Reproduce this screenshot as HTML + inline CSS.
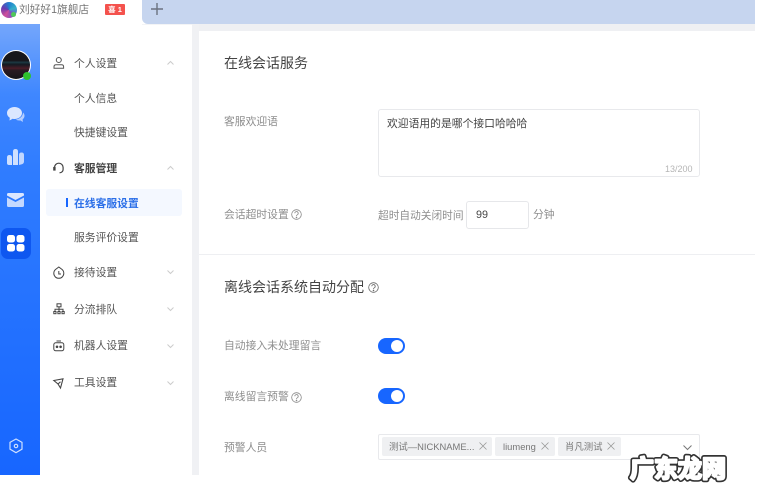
<!DOCTYPE html>
<html><head><meta charset="utf-8">
<style>
html,body{margin:0;padding:0;background:#fff}
body{width:764px;height:496px;position:relative;overflow:hidden;font-family:"Liberation Sans","Noto Sans CJK SC",sans-serif;color:#555}
#w{position:absolute;left:0;top:0;width:764px;height:496px;filter:blur(.35px)}
.a{position:absolute;white-space:nowrap}
.m{font-size:10.8px;line-height:16px;color:#555}
.l{font-size:10.8px;line-height:16px;color:#8e8e8e}
.h{font-size:14px;line-height:20px;color:#444}
svg{position:absolute;overflow:visible}
.tag{position:absolute;top:437px;height:19px;background:#eff0f2;border-radius:2px;font-size:9.4px;line-height:20px;color:#777;white-space:nowrap;box-sizing:border-box;padding-left:7px}
.sw{position:absolute;left:378px;width:27px;height:16px;border-radius:8px;background:#1766ff}
.sw i{position:absolute;right:2px;top:2px;width:12px;height:12px;border-radius:50%;background:#fff}
</style></head><body><div id="w">
<div class="a" style="left:142px;top:0;width:613px;height:24px;background:#c6d5ef;border-bottom-left-radius:6px"></div>
<div class="a" style="left:192px;top:24px;width:563px;height:7px;background:#eff0f3"></div>
<div class="a" style="left:142px;top:24px;width:50px;height:1px;background:#f3f4f6"></div>
<div class="a" style="left:192px;top:24px;width:7px;height:451px;background:#f0f1f4"></div>
<div class="a" style="left:1px;top:2px;width:16px;height:16px;border-radius:50%;background:conic-gradient(#1f7fd0,#36b2c8,#7b4dc4,#d0509a,#6a3ab0,#1f7fd0)"></div>
<div class="a" style="left:11px;top:12px;width:5px;height:5px;border-radius:50%;background:#4fc75a"></div>
<div class="a" style="left:19px;top:1px;font-size:10.7px;line-height:18px;color:#777">刘好好1旗舰店</div>
<div class="a" style="left:105px;top:4px;width:20px;height:11px;background:#f4524d;border-radius:1px;color:#fff;font-size:7.500px;line-height:11px;text-align:center;font-weight:bold">喜 1</div>
<svg style="left:151px;top:3px" width="12" height="12"><path d="M6 0V12M0 6H12" stroke="#6b7280" stroke-width="1.4"/></svg>

<!-- blue rail -->
<div class="a" style="left:0;top:24px;width:40px;height:451px;background:linear-gradient(180deg,#74a6fb 0,#3f87ff 70px,#2f7cff 150px,#1766ff 100%)"></div>
<div class="a" style="left:1px;top:50px;width:30px;height:30px;border-radius:50%;background:#fff"></div>
<div class="a" style="left:2px;top:51px;width:28px;height:28px;border-radius:50%;background:linear-gradient(180deg,#17171c 0,#17171c 35%,#1c3a44 40%,#141a22 48%,#4a1c26 62%,#2a1a22 68%,#15151a 100%)"></div>
<div class="a" style="left:23px;top:72px;width:8px;height:8px;border-radius:50%;background:#2fc22f"></div>
<svg style="left:7px;top:107px" width="18" height="16" fill="#dbe7ff"><path d="M7.500 0C3.300 0 0 2.700 0 6c0 2 1.100 3.700 2.800 4.800L2.500 13.500l3.200-1.800C6.300 11.900 6.900 12 7.500 12c4.200 0 7.500-2.700 7.500-6S11.700 0 7.500 0Z"/><path d="M16 5.500c1 1 1.500 2.100 1.500 3.300 0 1.500-.7 2.700-1.900 3.600l.3 2.600-2.600-1.600c-1.800.3-3.300-.1-4.500-.9 3.900-.4 7.200-3.100 7.200-7Z" fill="#b4ceff"/></svg>
<svg style="left:7px;top:149px" width="17" height="16" fill="#cfe0ff"><path d="M0 8.500Q0 6 2.500 6T5 8.500V16H2Q0 16 0 14Z"/><path d="M6 2.500Q6 0 8.500 0T11 2.500V16H6Z"/><path d="M12 6Q12 3.500 14.500 3.500T17 6V12.500Q17 15 14 15.500L12 16Z" fill="#c0d6ff"/></svg>
<svg style="left:7px;top:193px" width="17" height="14"><path d="M0 1.500Q0 0 1.500 0H15.500Q17 0 17 1.500V2.500L8.500 7 0 2.500Z" fill="#dbe7ff"/><path d="M0 4.500L8.500 9 17 4.500V12.500Q17 14 15.500 14H1.500Q0 14 0 12.500Z" fill="#c4d9ff"/></svg>
<div class="a" style="left:1px;top:228px;width:30px;height:31px;border-radius:7px;background:#0e57f0"></div>
<svg style="left:7px;top:235px" width="18" height="17" fill="#fff"><rect width="8" height="7.500" rx="2.500"/><rect x="9.500" width="8" height="7.500" rx="2.500"/><rect y="9" width="8" height="7.500" rx="2.500"/><rect x="9.500" y="9" width="8" height="7.500" rx="2.500"/></svg>
<svg style="left:9px;top:438px" width="14" height="16" fill="none" stroke="#cfe0ff" stroke-width="1.200"><path d="M7 1L13 4.300V11.200L7 14.700 1 11.200V4.300Z"/><circle cx="7" cy="8" r="1.700"/></svg>

<!-- menu -->
<svg style="left:53px;top:57px" width="12" height="12" fill="none" stroke="#555" stroke-width="1"><circle cx="5.800" cy="3" r="2.500"/><path d="M1 11.200V9.800Q1 7.800 3 7.800H8.600Q10.600 7.800 10.600 9.800V11.200Z"/></svg>
<div class="a m" style="left:74px;top:56px">个人设置</div>
<svg style="left:167px;top:61px" width="7" height="4" fill="none" stroke="#ccc"><path d="M.5 3.500L3.500.5 6.500 3.500"/></svg>
<div class="a m" style="left:74px;top:91px">个人信息</div>
<div class="a m" style="left:74px;top:125px">快捷键设置</div>
<svg style="left:53px;top:162px" width="12" height="12" fill="none" stroke="#444" stroke-width="1.200"><path d="M1.500 7.500V5.500a4.300 4.300 0 0 1 8.600 0V7.500M10.100 7.500Q10 10.500 6.500 10.800"/><rect x=".8" y="5.500" width="1.200" height="2.500" fill="#444"/></svg>
<div class="a m" style="left:74px;top:161px;color:#444;font-weight:bold">客服管理</div>
<svg style="left:167px;top:166px" width="7" height="4" fill="none" stroke="#ccc"><path d="M.5 3.500L3.500.5 6.500 3.500"/></svg>
<div class="a" style="left:46px;top:189px;width:136px;height:27px;background:#f4f8ff;border-radius:3px"></div>
<div class="a" style="left:66px;top:198px;width:2px;height:9px;background:#1766ff"></div>
<div class="a m" style="left:74px;top:196px;color:#2b6fe8;font-weight:bold">在线客服设置</div>
<div class="a m" style="left:74px;top:230px">服务评价设置</div>
<svg style="left:53px;top:266px" width="12" height="13" fill="none" stroke="#444" stroke-width="1"><path d="M5.800 1L2.500 3.500Q.8 5 .8 7.300a5 5 0 0 0 10 0Q10.800 5 9.100 3.500Z"/><path d="M5.800 5V8H8" stroke-width="1"/></svg>
<div class="a m" style="left:74px;top:265px">接待设置</div>
<svg style="left:167px;top:270px" width="7" height="4" fill="none" stroke="#ccc"><path d="M.5.500L3.500 3.500 6.500.500"/></svg>
<svg style="left:53px;top:303px" width="12" height="12" fill="none" stroke="#444" stroke-width="1"><rect x="4" y=".8" width="4" height="3"/><path d="M6 4V8M2 8V6.200H10V8"/><rect x=".8" y="8.500" width="2.200" height="2.200"/><rect x="4.900" y="8.500" width="2.200" height="2.200"/><rect x="9" y="8.500" width="2.200" height="2.200"/></svg>
<div class="a m" style="left:74px;top:302px">分流排队</div>
<svg style="left:167px;top:307px" width="7" height="4" fill="none" stroke="#ccc"><path d="M.5.500L3.500 3.500 6.500.500"/></svg>
<svg style="left:53px;top:340px" width="12" height="12" fill="none" stroke="#444" stroke-width="1"><rect x=".8" y="2.800" width="10" height="8" rx="2"/><path d="M3.500 1H8"/><circle cx="4" cy="6.800" r=".8" fill="#444"/><circle cx="7.600" cy="6.800" r=".8" fill="#444"/></svg>
<div class="a m" style="left:74px;top:338px">机器人设置</div>
<svg style="left:167px;top:344px" width="7" height="4" fill="none" stroke="#ccc"><path d="M.5.500L3.500 3.500 6.500.500"/></svg>
<svg style="left:53px;top:378px" width="11" height="11" fill="none" stroke="#444" stroke-width="1.100"><path d="M.8 2.500L10 .8 7.500 10 5 6Z"/><path d="M5 6L7.500 3.800"/></svg>
<div class="a m" style="left:74px;top:375px">工具设置</div>
<svg style="left:167px;top:381px" width="7" height="4" fill="none" stroke="#ccc"><path d="M.5.500L3.500 3.500 6.500.500"/></svg>

<!-- content -->
<div class="a h" style="left:224px;top:53px">在线会话服务</div>
<div class="a l" style="left:224px;top:114px">客服欢迎语</div>
<div class="a" style="left:378px;top:109px;width:322px;height:68px;box-sizing:border-box;border:1px solid #e8e9ec;border-radius:3px"></div>
<div class="a" style="left:387px;top:116px;font-size:10.800px;line-height:16px;color:#444">欢迎语用的是哪个接口哈哈哈</div>
<div class="a" style="left:665px;top:162px;font-size:9px;line-height:14px;color:#b5b5b5">13/200</div>
<div class="a l" style="left:224px;top:207px">会话超时设置</div>
<svg style="left:291px;top:209px" width="11" height="11" fill="none" stroke="#888" stroke-width=".8"><circle cx="5.500" cy="5.500" r="4.800"/><path d="M3.800 4.300a1.700 1.700 0 1 1 2.500 1.500Q5.500 6.200 5.500 7"/><circle cx="5.500" cy="8.400" r=".4" fill="#888"/></svg>
<div class="a l" style="left:378px;top:208px;font-size:10.700px">超时自动关闭时间</div>
<div class="a" style="left:466px;top:201px;width:63px;height:28px;box-sizing:border-box;border:1px solid #e6e7ea;border-radius:3px"></div>
<div class="a" style="left:476px;top:207px;font-size:10.800px;line-height:16px;color:#444">99</div>
<div class="a l" style="left:533px;top:207px">分钟</div>
<div class="a" style="left:199px;top:254px;width:556px;height:1px;background:#eeeff2"></div>

<div class="a h" style="left:224px;top:277px">离线会话系统自动分配</div>
<svg style="left:368px;top:282px" width="11" height="11" fill="none" stroke="#666" stroke-width=".8"><circle cx="5.500" cy="5.500" r="4.800"/><path d="M3.800 4.300a1.700 1.700 0 1 1 2.500 1.500Q5.500 6.200 5.500 7"/><circle cx="5.500" cy="8.400" r=".4" fill="#666"/></svg>
<div class="a l" style="left:224px;top:338px">自动接入未处理留言</div>
<div class="sw" style="top:338px"><i></i></div>
<div class="a l" style="left:224px;top:389px">离线留言预警</div>
<svg style="left:291px;top:392px" width="11" height="11" fill="none" stroke="#888" stroke-width=".8"><circle cx="5.500" cy="5.500" r="4.800"/><path d="M3.800 4.300a1.700 1.700 0 1 1 2.500 1.500Q5.500 6.200 5.500 7"/><circle cx="5.500" cy="8.400" r=".4" fill="#888"/></svg>
<div class="sw" style="top:388px"><i></i></div>
<div class="a l" style="left:224px;top:440px">预警人员</div>
<div class="a" style="left:378px;top:434px;width:322px;height:26px;box-sizing:border-box;border:1px solid #e8e9ec;border-radius:2px"></div>
<div class="tag" style="left:382px;width:110px">测试—NICKNAME...</div>
<svg style="left:479px;top:442px" width="8" height="8" stroke="#999" stroke-width=".8"><path d="M.5.500L7.500 7.500M7.500.500L.5 7.500"/></svg>
<div class="tag" style="left:495px;width:60px;padding-left:8px">liumeng</div>
<svg style="left:541px;top:442px" width="8" height="8" stroke="#999" stroke-width=".8"><path d="M.5.500L7.500 7.500M7.500.500L.5 7.500"/></svg>
<div class="tag" style="left:558px;width:63px;padding-left:7px">肖凡测试</div>
<svg style="left:607px;top:442px" width="8" height="8" stroke="#999" stroke-width=".8"><path d="M.5.500L7.500 7.500M7.500.500L.5 7.500"/></svg>
<svg style="left:683px;top:445px" width="9" height="5" fill="none" stroke="#777"><path d="M.5.500L4.500 4.500 8.500.500"/></svg>

<svg style="left:0;top:0" width="764" height="496"><g font-size="24" font-weight="700" font-family="Noto Sans CJK SC, sans-serif" stroke-linejoin="round"><text x="630" y="477" fill="#333" stroke="#333" stroke-width="5.500">广东龙网</text><text x="630" y="477" fill="#fff" stroke="#fff" stroke-width="2.200">广东龙网</text></g></svg>
</div></body></html>
